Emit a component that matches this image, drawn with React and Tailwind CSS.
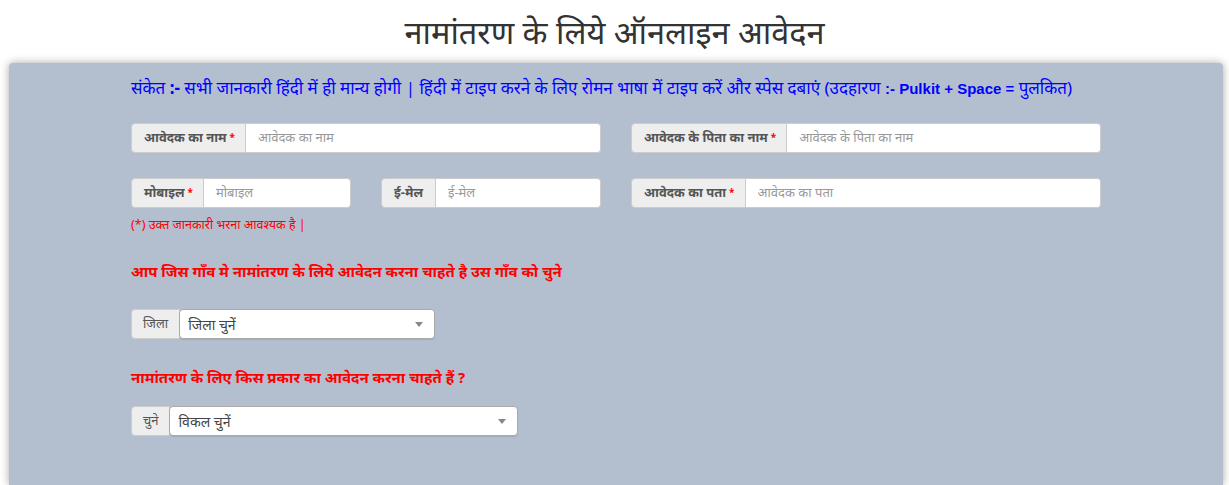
import React from "react";

function Addon({ children, bold = true, req = false, px = "px-3" }) {
  return (
    <span
      className={`flex items-center whitespace-nowrap border border-[#ccc] bg-[#eee] ${px} text-[13px] text-[#555] rounded-l-[4px] ${bold ? "font-bold" : "font-normal"}`}
    >
      {children}
      {req && <span className="ml-[3px] text-[10px] leading-none text-[#ff0000] font-bold -mt-[2px]">*</span>}
    </span>
  );
}

function InputGroup({ label, placeholder, req = true, className = "" }) {
  return (
    <div className={`flex h-[30px] ${className}`}>
      <Addon req={req} px={req ? "pl-3 pr-[10px]" : "px-3"}>{label}</Addon>
      <input
        className="min-w-0 flex-1 border border-l-0 border-[#ccc] bg-white px-3 text-[13px] text-[#555] placeholder:text-[#999] rounded-r-[4px] outline-none"
        placeholder={placeholder}
      />
    </div>
  );
}

function SelectGroup({ label, value, width }) {
  return (
    <div className={`flex h-[30px] ${width}`}>
      <Addon bold={false} px="px-[11px]">{label}</Addon>
      <div className="relative flex flex-1 items-center border border-[#aaa] bg-white pl-[8px] text-[14px] text-[#444] rounded-[4px] -ml-px shadow-[0_1px_1px_rgba(0,0,0,0.1)]">
        <span>{value}</span>
        <span className="absolute right-[11px] top-[12px] h-0 w-0 border-x-[4px] border-t-[5px] border-x-transparent border-t-[#888]" />
      </div>
    </div>
  );
}

export default function App() {
  return (
    <div
      className="min-h-[485px] bg-white"
      style={{ fontFamily: '"Noto Sans", "Noto Sans Devanagari", "Liberation Sans", sans-serif' }}
    >
      <h1 className="pt-[8px] pb-[8px] text-center text-[32.5px] font-normal leading-[47px] text-[#333]">
        नामांतरण के लिये ऑनलाइन आवेदन
      </h1>
      <div className="ml-[9px] mr-[6px] min-h-[422px] rounded-t-[4px] bg-[#b3bfcf] shadow-[0_0_8px_rgba(0,0,0,0.35)] pt-[14px]">
        <div className="ml-[122px] w-[970px]">
          <p className="whitespace-nowrap text-[17px] font-normal leading-[22px] text-[#0000ff]">
            संकेत <b>:-</b> सभी जानकारी हिंदी में ही मान्य होगी | हिंदी में टाइप करने के लिए रोमन भाषा में टाइप करें और स्पेस दबाएं (उदहारण{" "}
            <b className="text-[15px]" style={{ fontFamily: '"Liberation Sans", Arial, sans-serif' }}>:- Pulkit + Space =</b> पुलकित)
          </p>

          <div className="mt-[23px] grid grid-cols-2 gap-x-[30px]">
            <InputGroup label="आवेदक का नाम" placeholder="आवेदक का नाम" />
            <InputGroup label="आवेदक के पिता का नाम" placeholder="आवेदक के पिता का नाम" />
          </div>

          <div className="mt-[25px] grid grid-cols-[220px_220px_470px] gap-x-[30px]">
            <div>
              <InputGroup label="मोबाइल" placeholder="मोबाइल" />
              <p className="mt-[8px] text-[12.5px] leading-[17px] text-[#ff0000]">(*) उक्त जानकारी भरना आवश्यक है |</p>
            </div>
            <div>
              <InputGroup label="ई-मेल" placeholder="ई-मेल" req={false} />
            </div>
            <div>
              <InputGroup label="आवेदक का पता" placeholder="आवेदक का पता" />
            </div>
          </div>

          <p className="mt-[27px] text-[15px] font-bold leading-[22px] text-[#ff0000]">
            आप जिस गाँव मे नामांतरण के लिये आवेदन करना चाहते है उस गाँव को चुने
          </p>

          <div className="mt-[27px]">
            <SelectGroup label="जिला" value="जिला चुनें" width="w-[304px]" />
          </div>

          <p className="mt-[27px] text-[15px] font-bold leading-[22px] text-[#ff0000]">
            नामांतरण के लिए किस प्रकार का आवेदन करना चाहते हैं ?
          </p>

          <div className="mt-[18px]">
            <SelectGroup label="चुने" value="विकल चुनें" width="w-[387px]" />
          </div>
        </div>
      </div>
    </div>
  );
}
